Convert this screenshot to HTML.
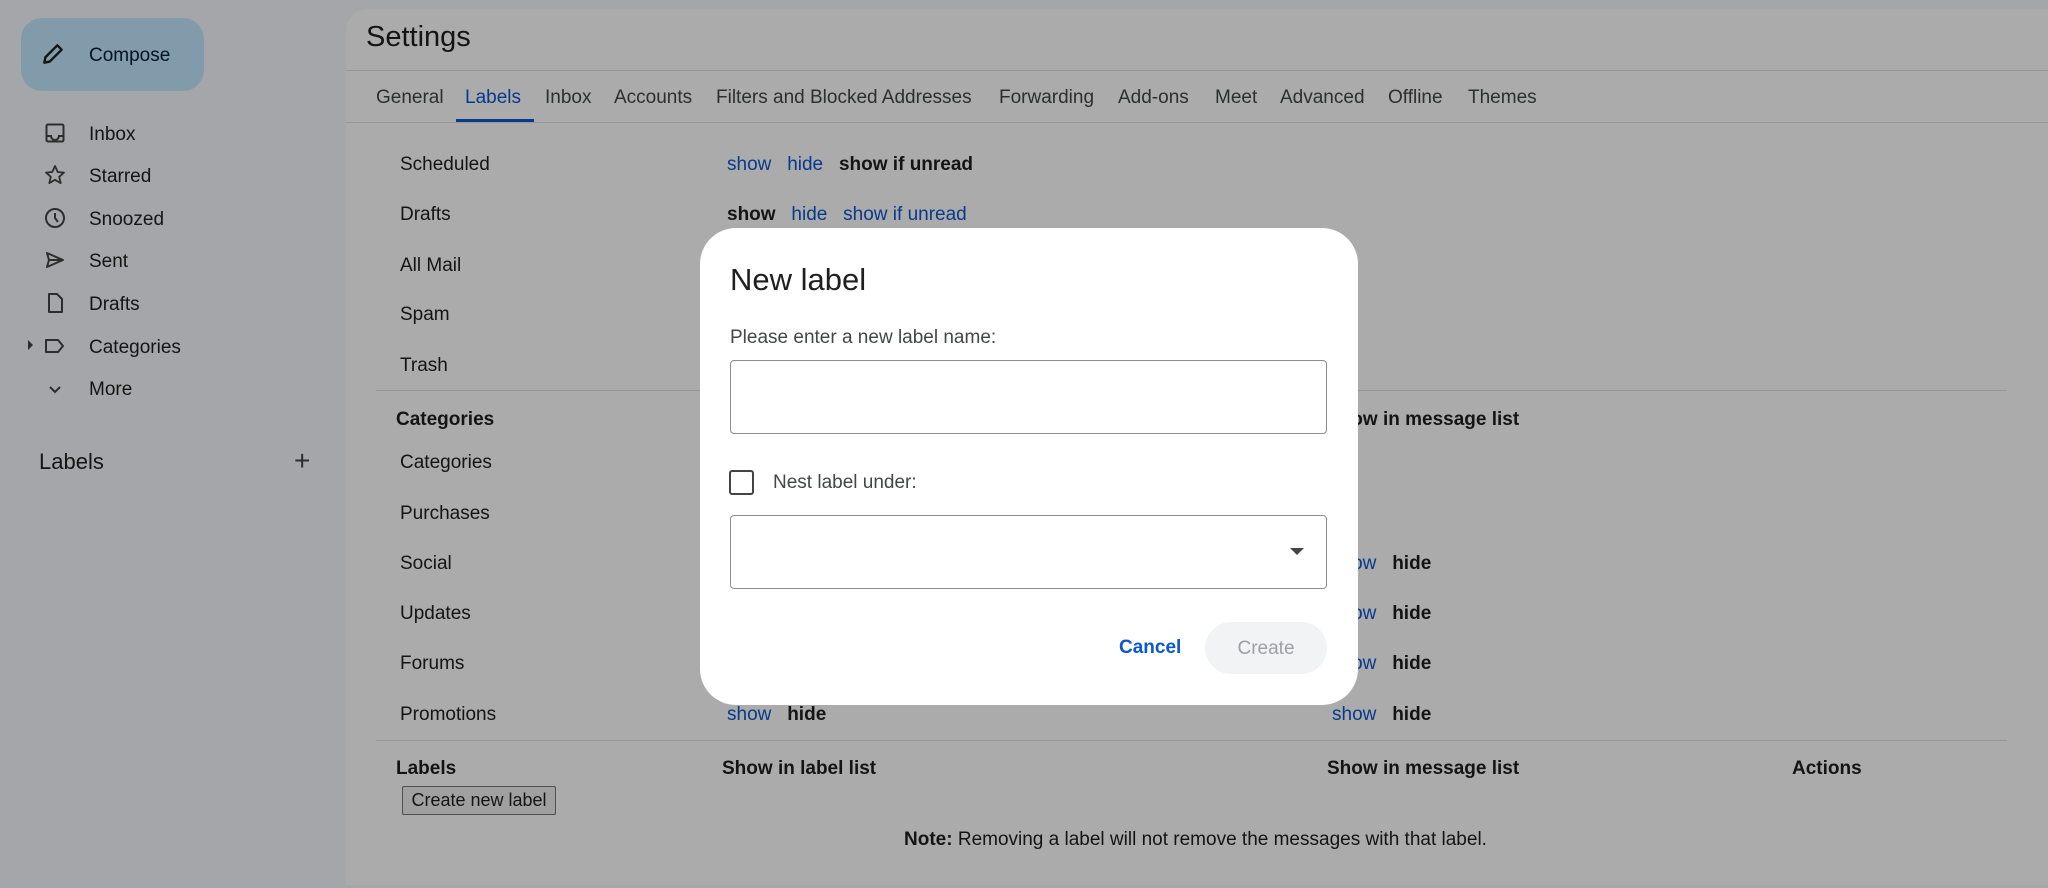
<!DOCTYPE html>
<html><head><style>
*{margin:0;padding:0;box-sizing:border-box}
body{width:2048px;height:888px;overflow:hidden;background:#f6f8fc;font-family:"Liberation Sans",Arial,sans-serif;color:#1f1f1f;position:relative}
.a{position:absolute;white-space:nowrap}
.nav{font-size:19px;left:89px;margin-top:2px}
.ic{position:absolute;left:43px;width:24px;height:24px}
.main{position:absolute;left:346px;top:9px;width:1702px;height:876px;background:#fff;border-radius:22px 0 0 0}
.t{font-size:19px;color:#444746;margin-top:1px}
.r{font-size:19px;margin-top:2px}
.l{color:#0b57d0}
.b{font-weight:bold}
.ov{position:absolute;left:0;top:0;width:2048px;height:888px;background:rgba(0,0,0,0.33)}
.dlg{position:absolute;left:700px;top:228px;width:658px;height:477px;background:#fff;border-radius:36px}
</style></head><body>
<div class="a" style="left:21px;top:18px;width:183px;height:73px;background:#c2e7ff;border-radius:21px"></div>
<svg class="a" style="left:40px;top:40px" width="26" height="28" viewBox="0 0 24 24"><path d="M4 20 L5 15 L16 4 L20 8 L9 19 Z" fill="none" stroke="#1f1f1f" stroke-width="2.2" stroke-linejoin="round"/></svg>
<div class="a" style="left:89px;top:45px;font-size:19px;color:#001d35">Compose</div>

<svg class="ic" style="top:121px" viewBox="0 0 24 24"><rect x="3.5" y="3.5" width="17" height="17" rx="1.5" fill="none" stroke="#444" stroke-width="2"/><path d="M3.5 15h4.5a4 4 0 0 0 8 0h4.5" fill="none" stroke="#444" stroke-width="2"/></svg>
<div class="a nav" style="top:122px">Inbox</div>
<svg class="ic" style="top:163px" viewBox="0 0 24 24"><path d="M12 3l2.7 6 6.3.6-4.8 4.2 1.5 6.3L12 16.8 6.3 20.1l1.5-6.3L3 9.6l6.3-.6z" fill="none" stroke="#444" stroke-width="1.8" stroke-linejoin="round"/></svg>
<div class="a nav" style="top:164px">Starred</div>
<svg class="ic" style="top:206px" viewBox="0 0 24 24"><circle cx="12" cy="12" r="9" fill="none" stroke="#444" stroke-width="2"/><path d="M12 7v5l3 4" fill="none" stroke="#444" stroke-width="2"/></svg>
<div class="a nav" style="top:207px">Snoozed</div>
<svg class="ic" style="top:248px" viewBox="0 0 24 24"><path d="M4 5l16 7-16 7 2-7z M6 12h14" fill="none" stroke="#444" stroke-width="2" stroke-linejoin="round"/></svg>
<div class="a nav" style="top:249px">Sent</div>
<svg class="ic" style="top:291px" viewBox="0 0 24 24"><path d="M6 3h8l5 5v13H6z" fill="none" stroke="#444" stroke-width="2" stroke-linejoin="round"/></svg>
<div class="a nav" style="top:292px">Drafts</div>
<div class="a" style="left:28px;top:340px;width:0;height:0;border-left:5px solid #444;border-top:5px solid transparent;border-bottom:5px solid transparent"></div>
<svg class="ic" style="top:334px" viewBox="0 0 24 24"><path d="M3 6h12l5 6-5 6H3z" fill="none" stroke="#444" stroke-width="2" stroke-linejoin="round"/></svg>
<div class="a nav" style="top:335px">Categories</div>
<svg class="ic" style="top:377px" viewBox="0 0 24 24"><path d="M7 10l5 5 5-5" fill="none" stroke="#444" stroke-width="2"/></svg>
<div class="a nav" style="top:377px">More</div>
<div class="a" style="left:39px;top:449px;font-size:22px">Labels</div>
<div class="a" style="left:294px;top:445px;font-size:28px;color:#444;font-weight:300">+</div>

<div class="main"></div>
<div class="a" style="left:366px;top:21px;font-size:29px">Settings</div>
<div class="a" style="left:346px;top:70px;width:1702px;height:1px;background:#e0e0e0"></div>
<div class="a t" style="left:376px;top:86px">General</div>
<div class="a t" style="left:465px;top:86px;color:#0b57d0">Labels</div>
<div class="a t" style="left:545px;top:86px">Inbox</div>
<div class="a t" style="left:614px;top:86px">Accounts</div>
<div class="a t" style="left:716px;top:86px">Filters and Blocked Addresses</div>
<div class="a t" style="left:999px;top:86px">Forwarding</div>
<div class="a t" style="left:1118px;top:86px">Add-ons</div>
<div class="a t" style="left:1215px;top:86px">Meet</div>
<div class="a t" style="left:1280px;top:86px">Advanced</div>
<div class="a t" style="left:1388px;top:86px">Offline</div>
<div class="a t" style="left:1468px;top:86px">Themes</div>
<div class="a" style="left:456px;top:119px;width:78px;height:3px;background:#0b57d0"></div>
<div class="a" style="left:346px;top:122px;width:1702px;height:1px;background:#e0e0e0"></div>

<div class="a r" style="left:400px;top:152px">Scheduled</div>
<div class="a r" style="left:727px;top:152px"><span class="l">show</span>&nbsp;&nbsp; <span class="l">hide</span>&nbsp;&nbsp; <span class="b">show if unread</span></div>
<div class="a r" style="left:400px;top:202px">Drafts</div>
<div class="a r" style="left:727px;top:202px"><span class="b">show</span>&nbsp;&nbsp; <span class="l">hide</span>&nbsp;&nbsp; <span class="l">show if unread</span></div>
<div class="a r" style="left:400px;top:253px">All Mail</div>
<div class="a r" style="left:400px;top:302px">Spam</div>
<div class="a r" style="left:400px;top:353px">Trash</div>
<div class="a" style="left:376px;top:390px;width:1631px;height:1px;background:#e0e0e0"></div>
<div class="a r b" style="left:396px;top:407px">Categories</div>
<div class="a r b" style="left:1327px;top:407px">Show in message list</div>
<div class="a r" style="left:400px;top:450px">Categories</div>
<div class="a r" style="left:400px;top:501px">Purchases</div>
<div class="a r" style="left:400px;top:551px">Social</div>
<div class="a r" style="left:400px;top:601px">Updates</div>
<div class="a r" style="left:400px;top:651px">Forums</div>
<div class="a r" style="left:400px;top:702px">Promotions</div>
<div class="a r" style="left:727px;top:702px"><span class="l">show</span>&nbsp;&nbsp; <span class="b">hide</span></div>
<div class="a r" style="left:1332px;top:551px"><span class="l">show</span>&nbsp;&nbsp; <span class="b">hide</span></div>
<div class="a r" style="left:1332px;top:601px"><span class="l">show</span>&nbsp;&nbsp; <span class="b">hide</span></div>
<div class="a r" style="left:1332px;top:651px"><span class="l">show</span>&nbsp;&nbsp; <span class="b">hide</span></div>
<div class="a r" style="left:1332px;top:702px"><span class="l">show</span>&nbsp;&nbsp; <span class="b">hide</span></div>
<div class="a" style="left:376px;top:740px;width:1631px;height:1px;background:#e0e0e0"></div>
<div class="a r b" style="left:396px;top:756px">Labels</div>
<div class="a r b" style="left:722px;top:756px">Show in label list</div>
<div class="a r b" style="left:1327px;top:756px">Show in message list</div>
<div class="a r b" style="left:1792px;top:756px">Actions</div>
<div class="a" style="left:402px;top:786px;width:154px;height:29px;background:#efefef;border:1px solid #767676;border-radius:2px;font-size:18px;text-align:center;line-height:27px">Create new label</div>
<div class="a r" style="left:904px;top:827px"><span class="b">Note:</span> Removing a label will not remove the messages with that label.</div>

<div class="ov"></div>
<div class="dlg"></div>
<div class="a" style="left:730px;top:262px;font-size:31px">New label</div>
<div class="a" style="left:730px;top:327px;font-size:19px;color:#444746">Please enter a new label name:</div>
<div class="a" style="left:730px;top:360px;width:597px;height:74px;border:1px solid #8e8e8e;border-radius:4px"></div>
<div class="a" style="left:729px;top:470px;width:25px;height:25px;border:2px solid #444;border-radius:3px"></div>
<div class="a" style="left:773px;top:472px;font-size:19px;color:#444746">Nest label under:</div>
<div class="a" style="left:730px;top:515px;width:597px;height:74px;border:1px solid #8e8e8e;border-radius:4px"></div>
<div class="a" style="left:1290px;top:548px;width:0;height:0;border-top:7px solid #444;border-left:7px solid transparent;border-right:7px solid transparent"></div>
<div class="a" style="left:1119px;top:637px;font-size:19px;color:#0b57d0;font-weight:bold">Cancel</div>
<div class="a" style="left:1205px;top:622px;width:122px;height:52px;background:#f1f3f4;border-radius:26px;font-size:19px;color:#9aa0a6;text-align:center;line-height:54px">Create</div>
</body></html>
